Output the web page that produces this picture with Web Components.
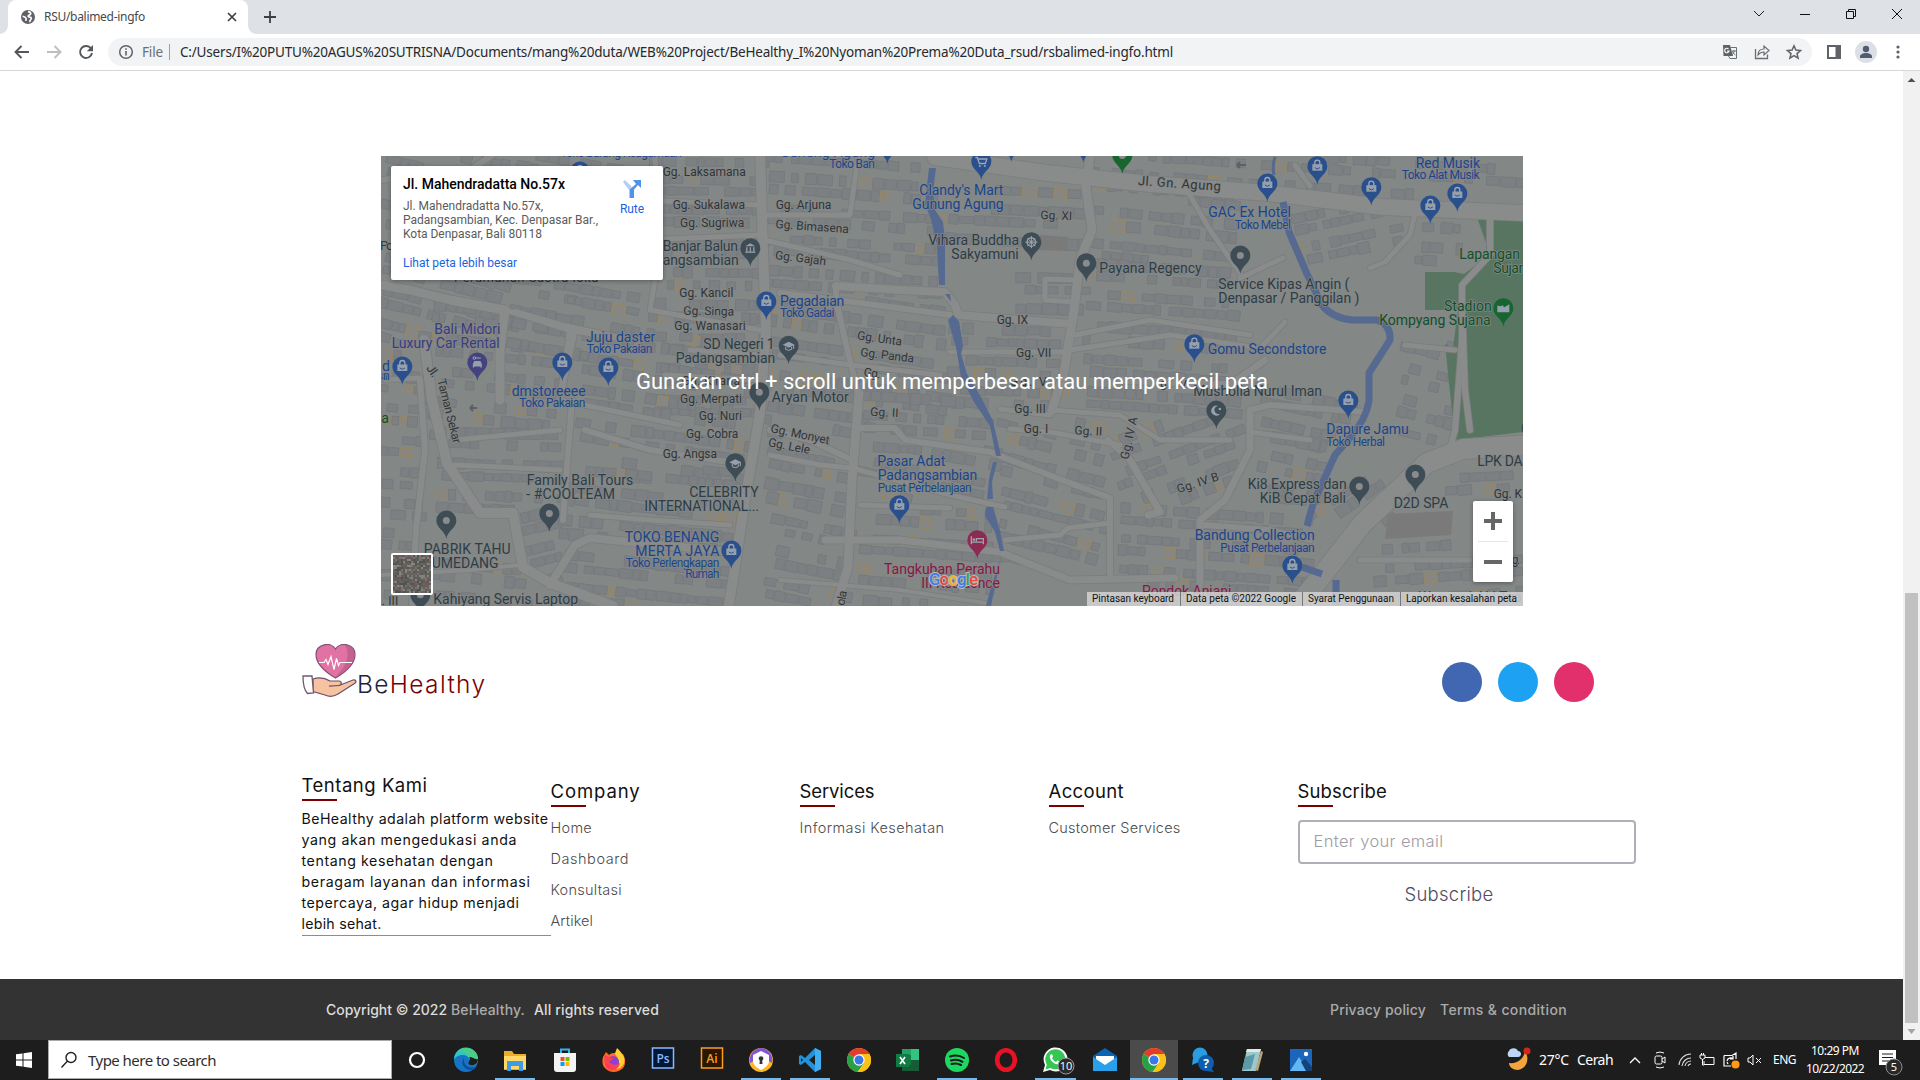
<!DOCTYPE html>
<html lang="id"><head><meta charset="utf-8"><title>RSU/balimed-ingfo</title>
<style>html,body{margin:0;width:1920px;height:1080px;overflow:hidden;background:#fff}</style></head>
<body><browser-window>
<map-embed></map-embed>
<site-footer></site-footer>
</browser-window>
<script>
const define=(name,html,after)=>customElements.define(name,class extends HTMLElement{
  constructor(){super();this.attachShadow({mode:'open'}).innerHTML=html}
  connectedCallback(){if(after)after.call(this,this.shadowRoot)}
});
const UI='"Noto Sans","Open Sans",sans-serif', GEO='Inter,"Open Sans",sans-serif';

/* One line of text tracked to a set width. */
define('fit-text','<style>:host{display:inline-block;white-space:nowrap}span{display:inline-block}</style><span><slot></slot></span>',function(r){
  const s=r.querySelector('span'),n=this.textContent.trim().length,w=+this.getAttribute('w');
  s.style.letterSpacing='0px';
  const d=(w-s.getBoundingClientRect().width)/n;
  s.style.letterSpacing=d+'px';this.style.width=w+'px';
});

/* ---------- browser chrome ---------- */
define('browser-tabs',`<style>
:host{display:flex;height:34px;background:#dee1e6;padding-left:8px;box-sizing:border-box;font:12px/34px ${UI};color:#45494d;position:relative}
.tab{width:240px;height:34px;background:#fff;border-radius:8px 8px 0 0;display:flex;align-items:center;padding:0 9px 0 13px;box-sizing:border-box;position:relative}
.tab:before,.tab:after{content:"";position:absolute;bottom:0;width:8px;height:8px;background:radial-gradient(circle at 0 0,#0000 7.5px,#fff 8px)}
.tab:before{left:-8px}.tab:after{right:-8px;transform:scaleX(-1)}
.tab fit-text{margin-left:9px;flex:1}svg{display:block}
.plus{margin:7px 0 0 15px}.win{margin-left:auto;display:flex;width:184px;padding-top:6px}.win svg{width:46px;height:16px}
</style><div class="tab"><svg width="14" height="14" viewBox="0 0 14 14"><circle cx="7" cy="7" r="7" fill="#5f6368"/><path d="M7 1.600c2 .2 3 1 2.700 2.200C9.400 5 7.500 4.800 7.200 6c-.2 1 .9 1 1.900 1.100 1.500.1 1.400 1.600.7 2.400-.7.7-.7 1.600-1.500 2.300M1.600 6.300c1.200.3 3 .9 3.400 1.900.4 1-.2 1.500 0 2.600" fill="none" stroke="#fff" stroke-width="1.700"/></svg><fit-text w="101">RSU/balimed-ingfo</fit-text><svg width="14" height="14"><path d="M3 3l8 8M11 3l-8 8" stroke="#3c4043" stroke-width="1.700"/></svg></div>
<svg class="plus" width="14" height="20"><path d="M7 4v12M1 10h12" stroke="#3c4043" stroke-width="1.800"/></svg>
<div class="win"><svg viewBox="0 0 46 16"><path d="M18 5l5 5 5-5" fill="none" stroke="#222"/></svg><svg viewBox="0 0 46 16"><path d="M18 8.500h10" stroke="#111"/></svg><svg viewBox="0 0 46 16"><path d="M18.500 5.500h7v7h-7zM20.500 5.500v-2h7v7h-2" fill="none" stroke="#111"/></svg><svg viewBox="0 0 46 16"><path d="M18 3l10 10M28 3L18 13" stroke="#111" fill="none"/></svg></div>`);

define('browser-toolbar',`<style>
:host{display:flex;align-items:center;height:37px;box-sizing:border-box;background:#fff;border-bottom:1px solid #d5d7da;padding:0 6px;font:13.500px/28px ${UI};color:#27292c}
svg{display:block;flex:none}.nav svg{width:32px;height:20px}.nav{display:flex;width:102px}
.box{display:flex;align-items:center;height:28px;width:1704px;border-radius:14px;background:#f1f3f4;padding:0 9px 0 10px;box-sizing:border-box}
.file{color:#6b6f74;margin:0 6px 0 8px}.bar{width:1px;height:16px;background:#9aa0a6;margin-right:10px}.end{margin-left:auto;display:flex;margin-right:-7px}.end svg{width:32px;height:20px}
.right{display:flex;margin-left:6px}.right svg{width:32px;height:24px}
</style><div class="nav">
<svg viewBox="0 0 32 20"><path d="M23 10H10M15.500 4l-6 6 6 6" fill="none" stroke="#53575c" stroke-width="1.900"/></svg>
<svg viewBox="0 0 32 20"><path d="M9 10h13M16.500 4l6 6-6 6" fill="none" stroke="#bcbfc2" stroke-width="1.900"/></svg>
<svg viewBox="0 0 32 20"><path d="M21 6.500A6 6 0 1 0 22 11" fill="none" stroke="#53575c" stroke-width="1.900"/><path d="M23 3v6.200h-6.200z" fill="#53575c"/></svg></div>
<div class="box"><svg width="16" height="16"><circle cx="8" cy="8" r="6.300" fill="none" stroke="#5f6368" stroke-width="1.500"/><path d="M8 7v4.500M8 4.200v1.600" stroke="#5f6368" stroke-width="1.600"/></svg>
<fit-text class="file" w="21">File</fit-text><div class="bar"></div><fit-text w="993">C:/Users/I%20PUTU%20AGUS%20SUTRISNA/Documents/mang%20duta/WEB%20Project/BeHealthy_I%20Nyoman%20Prema%20Duta_rsud/rsbalimed-ingfo.html</fit-text>
<div class="end"><svg viewBox="0 0 32 20"><path d="M9 3h7l3 11h-9.500z" fill="#5f6368"/><path d="M16.500 5.500H22.500V16.500H16l-1.500-2.500M18 9h4M20 8v1c0 2-1 3-2 4M18.500 9.500c.5 1.500 1.500 2.500 3 3.500" fill="none" stroke="#6b6f74"/><path d="M14.500 7A2.200 2.200 0 1 0 15 9h-2" fill="none" stroke="#fff" stroke-width="1.100"/></svg>
<svg viewBox="0 0 32 20"><path d="M9.500 7v9.500h12v-4" fill="none" stroke="#6b6f74" stroke-width="1.300"/><path d="M12 13c0-4 2.500-6 6-6V4l5 4.500-5 4.500v-3c-3 0-4.500 1-6 3z" fill="none" stroke="#6b6f74" stroke-width="1.200"/></svg>
<svg viewBox="0 0 32 20"><path d="M16 3.800l1.900 4.300 4.600.4-3.500 3.100 1.100 4.600-4.100-2.500-4.100 2.500 1.100-4.600-3.500-3.100 4.600-.4z" fill="none" stroke="#5f6368" stroke-width="1.500"/></svg></div></div>
<div class="right"><svg viewBox="0 0 32 24"><path d="M10 6h12v12H10z" fill="none" stroke="#5f6368" stroke-width="2"/><path d="M17.500 6H22v12h-4.500z" fill="#5f6368"/></svg>
<svg viewBox="0 0 32 24"><circle cx="16" cy="12" r="11" fill="#dcdfe6"/><circle cx="16" cy="9" r="3.200" fill="#505c74"/><path d="M10 18v-1.500c0-2 3-3.500 6-3.500s6 1.500 6 3.500V18z" fill="#505c74"/></svg>
<svg viewBox="0 0 32 24"><g fill="#5f6368"><circle cx="16" cy="7" r="1.600"/><circle cx="16" cy="12" r="1.600"/><circle cx="16" cy="17" r="1.600"/></g></svg></div>`);

define('page-scrollbar',`<style>:host{display:flex;flex-direction:column;width:17px;background:#f1f1f1;align-items:center}svg{display:block;height:17px;width:17px}.thumb{width:13px;height:430px;background:#c1c1c1;margin-top:505px}</style>
<svg><path d="M4.500 11l4-4 4 4z" fill="#505050"/></svg><div class="thumb"></div><svg><path d="M4.500 6l4 5 4-5z" fill="#a3a3a3"/></svg>`);

define('browser-window',`<style>:host{display:flex;flex-direction:column;width:1920px;height:1080px;overflow:hidden}
.view{display:flex;height:969px}main{display:flex;flex-direction:column;flex:1;background:#fff;padding-top:85px;box-sizing:border-box}</style>
<browser-tabs></browser-tabs><browser-toolbar></browser-toolbar><div class="view"><main><slot></slot></main><page-scrollbar></page-scrollbar></div><task-bar></task-bar>`);

/* ---------- map ---------- */
const O={A:[380,150],B:[780,150],C:[1150,150],D:[380,380],E:[780,380],F:[1150,380]};
const P=(s,x,y)=>[O[s][0]+x/3,O[s][1]+y/3];
const K={s:'#303538',b:'#1a458c',g:'#2d3d46',v:'#393c80',n:'#0f5028',r:'#851845'};
/* sector, x start, x end, baseline, text, size, colour, slope */
const LABELS=[
['A',540,905,22,'Toko Barang Keagamaan',12,'b'],['A',848,1097,77,'Gg. Laksamana',12,'s'],['A',878,1095,177,'Gg. Sukalawa',12,'s'],['A',900,1093,231,'Gg. Sugriwa',12,'s'],
['A',848,1074,304,'Banjar Balun',14,'g'],['A',848,1076,346,'angsambian',14,'g'],['A',222,655,395,'Perumahan Sastra loka',13,'s'],['A',0,40,300,'Po',13,'g'],
['A',898,1060,441,'Gg. Kancil',12,'s'],['A',910,1062,494,'Gg. Singa',12,'s',1],['A',883,1097,540,'Gg. Wanasari',12,'s'],['A',163,361,552,'Bali Midori',14,'v'],['A',35,359,594,'Luxury Car Rental',14,'v'],
['A',618,826,576,'Juju daster',14,'b'],['A',620,817,608,'Toko Pakaian',12,'b'],['A',970,1184,597,'SD Negeri 1',14,'g'],['A',887,1186,640,'Padangsambian',14,'g'],['A',6,30,662,'d',14,'b'],['A',4,29,690,'an',12,'b'],['A',138,165,655,'Jl.',12,'s',55],
['B',0,285,22,'Gunung Agung',14,'b'],['B',148,285,54,'Toko Ban',12,'b'],['B',418,670,136,"Clandy's Mart",14,'b'],['B',397,671,178,'Gunung Agung',14,'b'],['B',-13,154,177,'Gg. Arjuna',12,'s'],['B',-14,206,234,'Gg. Bimasena',12,'s',4],['B',-16,138,327,'Gg. Gajah',12,'s',7],
['B',781,876,207,'Gg. XI',12,'s',2],['B',445,717,285,'Vihara Buddha',14,'g'],['B',514,716,328,'Sakyamuni',14,'g'],['B',958,1265,370,'Payana Regency',14,'g'],['B',0,193,468,'Pegadaian',14,'b'],['B',0,163,500,'Toko Gadai',12,'b'],['B',650,744,522,'Gg. IX',12,'s'],['B',708,814,621,'Gg. VII',12,'s'],
['B',230,366,568,'Gg. Unta',12,'s',8],['B',240,402,618,'Gg. Panda',12,'s',7],['B',250,300,678,'Gg.',12,'s',8],['B',1073,1322,105,'Jl. Gn. Agung',13,'s',4],
['C',175,423,202,'GAC Ex Hotel',14,'b'],['C',254,423,237,'Toko Mebel',12,'b'],['C',797,990,54,'Red Musik',14,'b'],['C',755,989,86,'Toko Alat Musik',12,'b'],['C',205,598,417,'Service Kipas Angin (',14,'g'],['C',205,628,459,'Denpasar / Panggilan )',14,'g'],['C',928,1110,328,'Lapangan',14,'n'],['C',1030,1150,369,'Sujana',14,'n'],['C',882,1025,483,'Stadion',14,'n'],['C',688,1022,525,'Kompyang Sujana',14,'n'],['C',173,529,612,'Gomu Secondstore',14,'b'],
['D',395,617,48,'dmstoreeee',14,'b'],['D',418,616,82,'Toko Pakaian',12,'b'],['D',172,335,0,'Taman Sekar',12,'s',76],['D',900,1086,68,'Gg. Merpati',12,'s'],['D',956,1086,119,'Gg. Nuri',12,'s'],['D',918,1075,175,'Gg. Cobra',12,'s'],['D',848,1011,235,'Gg. Angsa',12,'s'],['D',905,1080,15,'Gg. Kirana',12,'s'],['D',440,760,315,'Family Bali Tours',14,'g'],['D',439,705,357,'- #COOLTEAM',14,'g'],['D',928,1136,350,'CELEBRITY',14,'g'],['D',793,1137,392,'INTERNATIONAL...',14,'g'],['D',734,1018,485,'TOKO BENANG',14,'b'],['D',766,1018,528,'MERTA JAYA',14,'b'],['D',737,1018,560,'Toko Perlengkapan',12,'b'],['D',916,1018,593,'Rumah',12,'b'],['D',131,392,521,'PABRIK TAHU',14,'g'],['D',130,356,563,'SUMEDANG',14,'g'],['D',160,594,672,'Kahiyang Servis Laptop',14,'g'],['D',5,55,674,'. III',12,'s'],['D',4,23,130,'a',14,'n'],['D',1170,1350,156,'Gg. Monyet',12,'s',12],['D',1163,1290,198,'Gg. Lele',12,'s',11],
['E',-25,206,65,'Aryan Motor',14,'g'],['E',270,355,107,'Gg. II',12,'s',3],['E',703,797,98,'Gg. III',12,'s'],['E',731,805,158,'Gg. I',12,'s'],['E',883,966,163,'Gg. II',12,'s',3],['E',1045,1175,240,'Gg. IV A',12,'s',-78],['E',292,496,258,'Pasar Adat',14,'b'],['E',293,592,300,'Padangsambian',14,'b'],['E',293,575,335,'Pusat Perbelanjaan',12,'b'],['E',312,660,583,'Tangkuban Perahu',14,'r'],['E',424,660,625,'III Residence',14,'r'],['E',193,240,678,'ola',12,'s',-80],['E',690,800,18,'Gg. V',12,'s'],
['F',130,516,48,'Musholla Nurul Iman',14,'g'],['F',30,110,22,'g. IV',12,'s',3],['F',529,776,162,'Dapure Jamu',14,'b'],['F',529,705,197,'Toko Herbal',12,'b'],['F',85,215,340,'Gg. IV B',12,'s',-18],['F',293,590,326,'Ki8 Express dan',14,'g'],['F',329,588,368,'KiB Cepat Bali',14,'g'],['F',731,895,383,'D2D SPA',14,'g'],['F',982,1118,257,'LPK DA',14,'g'],['F',1031,1116,353,'Gg. K',12,'s'],['F',134,494,480,'Bandung Collection',14,'b'],['F',211,494,515,'Pusat Perbelanjaan',12,'b'],['F',-24,244,648,'Pondok Anjani',14,'r'],['F',1085,1110,553,'g.',12,'s'],['F',805,1115,665,'Warung LALI Tua',14,'b']];
const PINS=[['A',600,120,'b','bag'],['A',1111,350,'g','bank'],['A',1159,510,'b','bag'],['A',67,705,'b','bag'],['A',292,693,'v','car'],['A',547,693,'b','bag'],['A',685,708,'b','bag'],['B',322,42,'b','dot'],['B',604,90,'b','cart'],['B',694,36,'b','dot'],['B',910,38,'b','dot'],['B',1027,72,'n','dot'],['B',754,332,'g','wheel'],['B',919,395,'g','dot'],['B',26,643,'g','cap'],
['C',352,156,'b','bag'],['C',502,104,'b','bag'],['C',664,167,'b','bag'],['C',841,222,'b','bag'],['C',922,186,'b','bag'],['C',271,372,'g','dot'],['C',1060,530,'n','field'],['C',133,638,'b','bag'],
['D',1138,92,'g','dot'],['D',1066,305,'g','cap'],['D',199,477,'g','dot'],['D',508,456,'g','dot'],['D',1054,567,'b','bag'],['D',121,700,'g','dot'],['E',358,431,'b','bag'],['E',592,536,'r','bed'],['F',199,147,'g','moon'],['F',595,117,'b','bag'],['F',628,375,'g','dot'],['F',796,339,'g','dot'],['F',427,612,'b','bag'],['F',1145,200,'g','dot'],['F',40,755,'r','dot']];
const PC={b:'#2a4f8d',g:'#3d4c55',v:'#444380',n:'#17652f',r:'#8b2b53'};
const f='fill="#96a0ad"',st='fill="none" stroke="#a2a7ad"';
const G={bag:`<path d="M-5-2h10v6.500H-5z" ${f}/><path d="M-2.500-1.500v-2a2.500 2.500 0 0 1 5 0v2" ${st} stroke-width="1.300"/><path d="M-2.500 1.500q2.500 2.500 5 0" fill="none" stroke="#2a4f8d"/>`,
dot:'<circle r="3.500" fill="#8b8b8b"/>',cap:`<path d="M-6-1l6-3 6 3-6 3z" ${f}/><path d="M-3 1v2.500q3 2 6 0V1M5-1v4" ${st}/>`,bank:`<path d="M-5-2l5-3 5 3z" ${f}/><path d="M-3.500-1v4M0-1v4M3.500-1v4M-5 4H5" ${st} stroke-width="1.200"/>`,
car:`<path d="M-4.500 5V1.500L-3-1.500h6l1.500 3V5H3V4h-6v1z" ${f}/><circle cx="-3" cy="-4.500" r="1.300" ${st}/><path d="M-1.500-4.500h5" ${st}/>`,cart:`<path d="M-6-4h2l2 6h6l1.500-4.500h-9" ${st} stroke-width="1.300"/><circle cx="-1.500" cy="4.500" r="1.100" ${f}/><circle cx="3.500" cy="4.500" r="1.100" ${f}/>`,
wheel:`<circle r="4.200" ${st} stroke-width="1.300"/><path d="M0-6V6M-6 0H6M-4-4L4 4M4-4L-4 4" ${st}/>`,field:`<path d="M-6-3q3 2 5 0l2 2 5-3V4H-6z" ${f}/>`,bed:`<path d="M-6-4v8M-6 2H6v2M6 1v-2.500H-1V1" ${st} stroke-width="1.300"/><circle cx="-3.500" cy="-.5" r="1.300" ${f}/>`,moon:`<path d="M2-4.500A5 5 0 1 0 4 3 4 4 0 1 1 2-4.500z" ${f}/><circle cx="3.500" cy="-1.500" r="1.300" ${f}/>`};
/* width, then points */
const ROADS=[[16,'935,157 1047,173 1150,184 1267,193 1383,207 1523,213'],[20,'1285,620 1313,587 1363,523 1427,463 1463,449 1530,445'],[9,'1090,157 1086,187 1092,230 1080,260 1074,310 1064,372 1052,410'],[9,'859,393 852,480 848,567 835,610'],[10,'760,150 763,250 766,330 760,413 745,500 733,580 728,610'],
[10,'424,340 432,400 447,463 480,513 513,513 523,567 550,583 613,606'],[6,'420,380 425,450 416,530 412,606'],[6,'572,400 563,520'],[8,'550,585 575,545 590,538 640,543 733,552'],[9,'381,285 410,290 450,300 505,310 500,350 500,400'],[6,'515,312 560,325 620,338 570,330 560,400'],[5,'505,310 575,332 560,400 680,425'],
[6,'585,430 650,450 735,463'],[8,'836,286 900,290 945,292 955,305 958,315 1072,324'],[6,'780,293 838,300 950,315'],[6,'836,286 836,300 845,340 858,393'],[6,'858,428 895,428 905,440 990,452 1062,480 1110,498 1110,575'],[6,'770,430 810,440 852,460'],[5,'770,455 820,465 852,468 950,495 1005,507'],[7,'825,540 900,540 1000,552 1070,580 1175,578'],[5,'1005,540 1060,535 1068,528 1110,523'],[7,'1130,460 1160,512 1148,515'],[6,'1130,460 1108,440'],
[5,'1185,187 1210,230 1240,273'],[5,'1240,278 1283,258'],[5,'1417,205 1410,235 1385,262 1370,268'],[5,'1295,165 1310,186'],[6,'1490,215 1490,255 1462,285 1462,340 1455,430 1450,448'],[6,'1462,300 1465,390 1470,430'],[5,'1075,280 1045,279 1045,300 1075,302'],[5,'1075,335 1150,320 1250,335'],[5,'1070,350 1170,335 1260,348 1285,322'],[7,'1250,410 1250,450 1225,500 1200,520 1200,590'],[6,'1250,410 1270,405 1365,412'],[5,'1250,432 1310,440'],[5,'1050,410 1120,415 1160,440 1230,440'],[5,'1000,409 1050,415'],[5,'1010,429 1050,432 1120,445'],[7,'1120,380 1230,385 1265,360'],[6,'1205,525 1270,530 1310,540'],[5,'1360,560 1470,560'],[5,'1405,345 1455,350'],[5,'455,440 560,430'],[5,'385,380 420,378'],[5,'590,515 650,520 730,525'],[5,'455,465 560,470'],[5,'860,505 950,508'],[5,'640,200 760,205'],[5,'640,240 760,235'],[5,'765,215 850,215 858,157'],[5,'765,240 850,260 900,275'],[5,'690,350 760,355'],[5,'665,375 760,380'],[5,'780,355 850,365 940,375'],[6,'381,180 470,170 500,150'],[5,'655,156 660,250 650,310 760,330'],[4,'381,575 470,570 520,565'],[4,'780,580 900,590 985,603'],[5,'950,352 1065,352'],[4,'950,495 1003,507']];
const PATCH=[[381,156,505,340,14],[505,156,650,300,9],[650,156,766,420,1],[766,156,940,300,4],[766,300,950,420,8],[940,190,1085,250,3],[1010,262,1085,310,1],[950,325,1070,410,2],[1090,200,1240,260,6],[1085,260,1235,420,4],[1090,157,1523,195,4],[1290,206,1405,260,-12],[1415,220,1462,262,3],[1395,345,1455,440,14],[1260,385,1355,450,12],[381,340,420,606,4],[424,300,560,440,6],[440,430,565,510,2],[520,515,560,580,-14],[580,340,750,480,8],[560,470,735,606,6],[430,560,530,606,6],[860,395,990,450,4],[765,430,850,606,11],[860,450,1000,500,11],[860,510,1000,606,4],[1000,420,1110,560,14],[1115,420,1240,500,-20],[1120,500,1310,606,4],[1260,440,1330,500,12],[1380,545,1523,606,-4],[1310,480,1390,520,-34],[1450,460,1523,500,-3],[505,300,650,360,10]];
function mapArt(){
  let seed=71;const R=()=>((seed=(seed*16807)%2147483647)-1)/2147483646;
  let o='<rect x="381" y="156" width="1142" height="450" fill="#838785"/>';
  for(const[x0,y0,x1,y1,a]of PATCH){
    const t=a*Math.PI/180,c=Math.cos(t),s=Math.sin(t),cx=(x0+x1)/2,cy=(y0+y1)/2,L=Math.hypot(x1-x0,y1-y0)/2;
    let row=0;
    for(let v=-L;v<L;row++){const h=10+R()*3;
      for(let u=-L;u<L;){const w=6+R()*9,X=cx+(u+w/2)*c-(v+h/2)*s,Y=cy+(u+w/2)*s+(v+h/2)*c;
        if(X>x0&&X<x1&&Y>y0&&Y<y1&&R()>.2){const q=R(),y=q<.06,hh=h*(.65+R()*.3);
          o+=`<rect x="${(-w/2).toFixed(1)}" y="${(-hh/2).toFixed(1)}" width="${w.toFixed(1)}" height="${hh.toFixed(1)}" transform="translate(${X.toFixed(1)} ${Y.toFixed(1)}) rotate(${(a+R()*4-2).toFixed(1)})" fill="${y?'#888682':'#7d8083'}" stroke="${y?'#9b8859':'#74787b'}" stroke-width=".8"/>`}
        u+=w+1.200+(R()<.14?6:0)}
      v+=h+(row%2?8:1)}
  }
  o+='<g fill="#577560"><path d="M1478 220h8v38l-22 16-10-2h-29v38h33l-5 38-8-4 10 96 68-8V220h-24v33l-8 4z"/><path d="M1494 220h29v32h-29z"/></g>';
  const road=(k)=>ROADS.map(([w,p])=>`<polyline points="${p}" stroke-width="${w+k}"/>`).join('');
  o+=`<g fill="none" stroke-linecap="round" stroke-linejoin="round"><g stroke="#7a7d7e">${road(1.6)}</g><g stroke="#8a8b8b">${road(0)}</g></g>`;
  o+='<g fill="#566990"><path d="M929 168h7l-3 24 2 18 8 12 2 18v45h-6l-2-40-6-26-6-15z"/><path d="M945 294l5 0 1 8z"/><path d="M948 320l5-5 6 6 4 25-2 8 6 20 15 25 11 22 8 35h-5l-6-30-16-24-13-25-5-30z"/><path d="M993 462h4l-5 20 1 17h-6l2-20z"/><path d="M986 507h7l3 10 4 14 4 20h-4l-5-19-10-16z"/><path d="M1000 561l-9 45h-5l6-22z"/></g><g fill="none" stroke="#566990" stroke-width="7" stroke-linejoin="round"><path d="M1275 157q-3 9-1 18" stroke-width="3"/><path d="M1283 202l6 30 18 42 15 31q10 13 30 15h25q14 5 13 20l-21 33v28q-3 19-20 38l-14 16-22 49-6 22"/><path d="M1302 567l20 7M1336 580v26"/></g>';
  o+='<path d="M1388 514l65-3-2 24-66 4zM1040 235l28 2-1 14-28-1z" fill="#7b7a7a"/><path d="M470 408h7m-7 0l3-3m-3 3l3 3M1237 165h9m-9 0l3-3m-3 3l3 3" stroke="#5d5f60" stroke-width="2" fill="none"/>';
  for(const[s,x,y,k,g]of PINS){const[X,Y]=P(s,x,y);
    o+=`<g transform="translate(${X} ${Y-18.500})"><path d="M0 18.500C-1 10-10 8-10 0a10 10 0 1 1 20 0C10 8 1 10 0 18.500z" fill="${PC[k]}"/>${G[g]}</g>`}
  for(const[s,a,b,y,t,z,k,r]of LABELS){const[X,Y]=P(s,a,y);let len=(b-a)/3;
    if(Math.abs(r)>50)len=t=='Jl.'?12:t=='Taman Sekar'?66:t=='ola'?15:43;
    o+=`<text x="${X}" y="${Y}" textLength="${len}" font-size="${z}" fill="${K[k]}" ${r?`transform="rotate(${r} ${X} ${Y})"`:''}>${t}</text>`}
  return o;
}
define('map-card',`<style>:host{position:absolute;left:10px;top:10px;width:272px;height:114px;box-sizing:border-box;background:#fff;border-radius:2px;box-shadow:0 1px 4px #0005;padding:9px 12px;font:12px/14px Roboto,sans-serif;color:#5b5b5b;display:flex;justify-content:space-between}
.c{display:flex;flex-direction:column}.t{font:500 14px/18px Roboto;color:#000;margin-bottom:6px}.l{margin-top:15px}.l,.r{color:#1a63e0}.r{display:flex;flex-direction:column;align-items:center;width:38px;padding-top:5px}svg{display:block;margin-bottom:4px}</style>
<div class="c"><fit-text class="t" w="162">Jl. Mahendradatta No.57x</fit-text><fit-text w="140">Jl. Mahendradatta No.57x,</fit-text><fit-text w="195">Padangsambian, Kec. Denpasar Bar.,</fit-text><fit-text w="139">Kota Denpasar, Bali 80118</fit-text><fit-text class="l" w="114">Lihat peta lebih besar</fit-text></div>
<div class="r"><svg width="18" height="18"><path d="M0 2l2-2 7 7-3 3z" fill="#b3cff6"/><path d="M6.500 18V9.500L13 4l-3-4h8v8l-3-3-4 4.500V18z" fill="#5094e8"/></svg><fit-text w="24">Rute</fit-text></div>`);
define('map-embed',`<style>:host{display:block;position:relative;width:1142px;height:450px;margin-left:381px;overflow:hidden;font:10px/14px Roboto,sans-serif}
.art{display:block;font-family:Roboto,sans-serif}.art text{paint-order:stroke;stroke:#858787;stroke-width:1.6px;stroke-linejoin:round}
.hint{position:absolute;inset:2px 0 0;display:flex;justify-content:center;align-items:center;font-size:22px;color:#fff}
.thumb{position:absolute;left:10px;top:397px;width:38px;height:38px;border:2px solid #fff;border-radius:2px;overflow:hidden;background:#555}
.goog{position:absolute;left:548px;top:411px;font:500 17px/24px Roboto;-webkit-text-stroke:2px #b9b9b9;paint-order:stroke fill}.goog b{font-weight:500}
.zoom{position:absolute;left:1092px;top:345px;width:40px;height:81px;background:#fff;border-radius:2px;box-shadow:0 1px 4px #0005}
.attr{position:absolute;right:0;bottom:0;height:14px;width:436px;display:flex;background:#d3d3d3d8;color:#111;padding-left:5px;box-sizing:border-box}.attr fit-text+fit-text{border-left:1px solid #777;margin-left:6px;padding-left:5px}</style>
<svg class="art" width="1142" height="450" viewBox="381 156 1142 450"></svg><div class="hint"><fit-text w="632">Gunakan ctrl + scroll untuk memperbesar atau memperkecil peta</fit-text></div><map-card></map-card>
<div class="thumb"><svg width="38" height="38"></svg></div>
<fit-text class="goog" w="48"><b style="color:#3f7ce8">G</b><b style="color:#e34a3f">o</b><b style="color:#edb51c">o</b><b style="color:#3f7ce8">g</b><b style="color:#3ba256">l</b><b style="color:#e34a3f">e</b></fit-text>
<div class="zoom"><svg width="40" height="81"><path d="M20 11v18M11 20h18M11 61h18" stroke="#666" stroke-width="4"/><path d="M5 40.500h30" stroke="#e6e6e6"/></svg></div>
<div class="attr"><fit-text w="82">Pintasan keyboard</fit-text><fit-text w="110">Data peta ©2022 Google</fit-text><fit-text w="86">Syarat Penggunaan</fit-text><fit-text w="111">Laporkan kesalahan peta</fit-text></div>`,function(r){
  r.querySelector('.art').innerHTML=mapArt();
  r.querySelectorAll('.goog b').forEach(b=>b.style.webkitTextStroke='2px #b9b9b9');
  let s=9;const R=()=>((s=(s*16807)%2147483647)/2147483647);let o='';
  const c=['#6c6262','#5d6259','#7a7470','#4f544f','#87837f','#6d5a59','#5a5d60'];
  for(let y=0;y<38;y+=2)for(let x=0;x<38;x+=2)o+=`<rect x="${x}" y="${y}" width="2.300" height="2.300" fill="${c[R()*7|0]}"/>`;
  r.querySelector('.thumb svg').innerHTML=o;
});

/* ---------- footer ---------- */
define('brand-logo',`<style>:host{display:flex;font:300 24.500px/36px ${GEO};color:#7a0000}i{font-style:normal;color:#1c2440}svg{display:block;margin-top:1px}fit-text{margin:22.500px 0 0 0}</style>
<svg width="55" height="55" viewBox="0 0 55 55"><path d="M33.500 34C25 29 14 21 14 10.500 14 0 29-3 33.500 5 38-3 53 0 53 10.500 53 21 42 29 33.500 34z" fill="#e072a4" stroke="#845070" stroke-width="1.200"/><path d="M43 1.500c5 0 9.500 3 9.500 9 0 10-11 18-19 22.500 7-7 12-15 12-23 0-4-1-7-2.500-8.500z" fill="#c4628f"/><path d="M17 18.500h5l2-3 2 5 3-8 3 13 2.500-11 2 7 1.500-3h12" fill="none" stroke="#fff" stroke-width="1.200"/>
<path d="M11 35c6-2 12-1 17 2h9c3 0 3 4 0 4.500l14-5.500c3-.5 4 2 1.500 3.500L36 50c-4 2.500-9 3-13 1l-12-3.500z" fill="#f6c3a0" stroke="#6f4d68" stroke-width="1.200"/><path d="M37 41.500l-10 .7" stroke="#6f4d68" fill="none" stroke-width="1.200"/><path d="M1 32h9l1.500 17-6 .5C2 46 1 39 1 32z" fill="#fff" stroke="#6f5970" stroke-width="1.300"/></svg><fit-text w="129.500"><i>Be</i>Healthy</fit-text>`);
define('footer-column',`<style>:host{display:flex;flex-direction:column;align-items:flex-start;font:300 14px/21px ${GEO};color:#333}
h3{margin:0;font:400 18.500px/27px ${GEO};color:#111;height:27px;padding-top:2px}hr{width:35px;height:2px;border:0;background:#7b0000;margin:0}</style><h3><slot name="head"></slot></h3><hr><slot></slot>`);
define('email-form',`<style>:host{display:flex;flex-direction:column;width:338px;font:300 16.500px/38px ${GEO};margin-top:13px;align-items:flex-start;color:#4f4c66}
div{box-sizing:border-box;width:338px;height:44px;border:2px solid #afafb7;border-radius:4px;padding-left:14px;color:#9c9ca5}.s{margin:11px 0 0 107px;font-size:18.500px}</style>
<div><fit-text w="130">Enter your email</fit-text></div><fit-text class="s" w="89">Subscribe</fit-text>`);
define('site-footer',`<style>:host{display:flex;flex-direction:column;flex:1;font:300 14px/21px ${GEO}}
.top{display:flex;justify-content:space-between;padding:37px 309px 0 302px;height:135px;box-sizing:border-box}.soc{display:flex;gap:16px;margin-top:19px}.soc i{width:40px;height:40px;border-radius:50%}
.cols{display:flex;padding:29px 0 0 301.500px;height:238px;box-sizing:border-box}footer-column{width:249px;margin-top:6px;flex:none}.about{margin-top:0}
.links{display:flex;flex-direction:column;color:#4b4b4b;line-height:31px;margin-top:5px;font-size:14.500px}.p{color:#111;display:flex;flex-direction:column;border-bottom:1px solid #8d8d8d;width:249px;margin-top:7px;padding-bottom:1px;font-weight:400;font-size:14.200px}
.copy{display:flex;justify-content:space-between;align-items:center;height:61px;background:#333;padding:0 336px 0 326px;color:#ababab;font:500 14px/21px ${GEO}}.copy div{display:flex}.w{color:#dcdcdc}
</style><div class="top"><brand-logo></brand-logo><div class="soc"><i style="background:#4267b2"></i><i style="background:#1da1f2"></i><i style="background:#e1306c"></i></div></div>
<div class="cols"><footer-column class="about"><fit-text slot="head" w="126">Tentang Kami</fit-text><div class="p"><fit-text w="247">BeHealthy adalah platform website</fit-text><fit-text w="215.500">yang akan mengedukasi anda</fit-text><fit-text w="192">tentang kesehatan dengan</fit-text><fit-text w="229">beragam layanan dan informasi</fit-text><fit-text w="218">tepercaya, agar hidup menjadi</fit-text><fit-text w="80">lebih sehat.</fit-text></div></footer-column>
<footer-column><fit-text slot="head" w="90">Company</fit-text><div class="links"><fit-text w="41.500">Home</fit-text><fit-text w="78.500">Dashboard</fit-text><fit-text w="71.500">Konsultasi</fit-text><fit-text w="42.500">Artikel</fit-text></div></footer-column>
<footer-column><fit-text slot="head" w="75">Services</fit-text><div class="links"><fit-text w="145">Informasi Kesehatan</fit-text></div></footer-column>
<footer-column><fit-text slot="head" w="75.500">Account</fit-text><div class="links"><fit-text w="132">Customer Services</fit-text></div></footer-column>
<footer-column><fit-text slot="head" w="89.500">Subscribe</fit-text><email-form></email-form></footer-column></div>
<div class="copy"><div><fit-text class="w" w="121">Copyright © 2022</fit-text><fit-text style="margin-left:4px" w="74">BeHealthy.</fit-text><fit-text class="w" style="margin-left:9px" w="125">All rights reserved</fit-text></div><div><fit-text w="96">Privacy policy</fit-text><fit-text style="margin-left:14px" w="127">Terms &amp; condition</fit-text></div></div>`);

/* ---------- taskbar ---------- */
const chrome='<circle cx="12" cy="12" r="12" fill="#fbc116"/><path d="M12 12L1.600 6A12 12 0 0 1 22.400 6z" fill="#e33b2e"/><path d="M1.600 6A12 12 0 0 0 10.500 23.900L17 15z" fill="#26a148"/><path d="M12 12V6h10.400A12 12 0 0 1 10.500 23.900L17 15z" fill="#fbc116"/><circle cx="12" cy="12" r="5.700" fill="#fff"/><circle cx="12" cy="12" r="4.500" fill="#3b78e7"/>';
const box=(bg,c,t)=>`<rect x="1.500" y="0" width="21" height="20" fill="${bg}" stroke="${c}" stroke-width="1.500"/><text x="12" y="14.500" text-anchor="middle" font-size="12" font-weight="600" fill="${c}">${t}</text>`;
const APPS=[
['<circle cx="12" cy="12" r="7" fill="none" stroke="#fff" stroke-width="2.200"/>'],
['<circle cx="12" cy="12" r="12" fill="#1673c5"/><path d="M0 12A12 12 0 0 1 24 11c0 5-4 7-8 6-2-1-2-2-1-4 1-3-2-6-6-6S1 9 0 12z" fill="#2fc4c7"/><path d="M12 0c7 0 12 4 12 11 0 5-4 7-8 6 0-8-2-13-12-14 2-2 5-3 8-3z" fill="#5bd268" opacity=".65"/><path d="M10 10c-4 5 0 12 7 12 3 0 4-1 5-3-7 2-13-1-12-9z" fill="#0d4f9c"/><path d="M15 13c1-2 1-3 0-4 4 0 6 3 9 2 0 5-4 7-8 6-2-1-2-2-1-4z" fill="#1e1e1e"/>'],
['<path d="M1 3h8l2 3h12v16H1z" fill="#e8ad2d"/><path d="M1 8h22v13H1z" fill="#ffd865"/><path d="M4 13h16v10h-4v-5H8v5H4z" fill="#3f9be8"/>',1],
['<path d="M8 6V1.500h8V6" fill="none" stroke="#34b3f1" stroke-width="2"/><path d="M1 5h22v16q0 3-3 3H4q-3 0-3-3z" fill="#f3f3f3"/><path d="M7.500 9h4v4h-4z" fill="#f25022"/><path d="M12.500 9h4v4h-4z" fill="#7fba00"/><path d="M7.500 14h4v4h-4z" fill="#00a4ef"/><path d="M12.500 14h4v4h-4z" fill="#ffb900"/>'],
['<path d="M1 9L4 4l3 3c2-2 4-2 6-2l2-4c2 2 3 4 3 6l3-1c3 5 3 12-1 15-5 4-12 4-16 0-4-3-4-8-3-12z" fill="#ff6b25"/><path d="M15 0c4 4 9 9 7 15-2 5-6 6-9 6 8-5 2-12 0-15z" fill="#ffd034"/><circle cx="11" cy="14" r="6" fill="#8a41d8"/><path d="M3 7c3 1 5 3 9 3-2 1-2 3-5 3 2 5 8 4 11 2-1 5-5 8-10 7-4-1-7-7-5-15z" fill="#ff3f54"/>'],
[box('#001833','#8bb8ff','Ps')],[box('#2a1700','#ff9b24','Ai')],
['<circle cx="12" cy="12" r="12" fill="#fbb724"/><path d="M12 0a12 12 0 0 1 11 15L12 9 1 15A12 12 0 0 1 12 0z" fill="#8056d6"/><path d="M12 3l8 4v6c0 4-4 7-8 9-4-2-8-5-8-9V7z" fill="#fff"/><circle cx="12" cy="10.500" r="2.300" fill="#333"/><path d="M11 11h2l.5 5h-3z" fill="#333"/>',1],
['<path d="M17 0l6 3v18l-6 3L7 14l-4 3-2-1V8l2-1 4 3zM17 7l-6 5 6 5zM3 10v4l2-2z" fill="#2292dc" fill-rule="evenodd"/><path d="M17 0l6 3v18l-6 3z" fill="#40aef2"/>',1],[chrome],
['<path d="M6 1h17v22H6z" fill="#21a366"/><path d="M6 12h17v11H6z" fill="#185c37"/><path d="M15 1h8v11h-8z" fill="#33c481"/><path d="M6 7h9v10H6z" fill="#107c41"/><path d="M0 6h13v13H0z" fill="#107c41"/><path d="M4 9l5 7M9 9l-5 7" stroke="#fff" stroke-width="1.700"/>'],
['<circle cx="12" cy="12" r="12" fill="#1ed760"/><path d="M5 8.500c5-1.500 10-1 14 1.500M6 12.500c4-1.300 8-.8 11.500 1.300M6.500 16c3.500-1 6.500-.6 9.500 1" fill="none" stroke="#1a1a1a" stroke-width="2" stroke-linecap="round"/>',1],
['<ellipse cx="12" cy="12" rx="8.800" ry="9.800" fill="none" stroke="#e81224" stroke-width="4.600"/>'],
['<path d="M0 24l2-7A12 12 0 1 1 7 22z" fill="#fff"/><path d="M2.500 21.500l1.300-5A10 10 0 1 1 7.500 20z" fill="#35c653"/><path d="M7 7c2-2 3 0 3 2l-1 1c1 2 2 3 4 4l1.500-1.500c2 .5 3 1.500 2 3-3 3-11-3-9.500-8.500z" fill="#fff"/><circle cx="23" cy="18" r="8" fill="#2b2b2b" stroke="#999"/><text x="23" y="22" font-size="11" text-anchor="middle" fill="#fff">10</text>',1],
['<path d="M0 8L12 0l12 8v15H0z" fill="#0a63b4"/><path d="M3 8h18v9H3z" fill="#fff"/><path d="M0 9l12 8 12-8v14H0z" fill="#2aa0ea"/>'],
[chrome,2],
['<circle cx="9" cy="7" r="7.500" fill="#2b9be2"/><path d="M2 10l-1 7 7-3z" fill="#2b9be2"/><circle cx="15" cy="15" r="8" fill="#0c5fae"/><path d="M20 20l3 4-8-1z" fill="#0c5fae"/><text x="15" y="19.500" font-size="12" font-weight="700" text-anchor="middle" fill="#fff">?</text>',1],
['<path d="M7 1h14l-5 22H2z" fill="#9dc8cd"/><path d="M7 1h14l-1 3H6z" fill="#dfe8e8"/><path d="M21 3l2 1-5 19-3-1z" fill="#bba67b"/><path d="M5 9l10-3-4 15-9 1z" fill="#5c9aa7"/>',1],
['<path d="M1 1h22v22H1z" fill="#1b65ba"/><path d="M1 23L10 9l9 14z" fill="#60b7f4"/><path d="M12 14l4-3 7 8v4H17z" fill="#164078"/><circle cx="17" cy="6" r="2.200" fill="#fff"/>',1]];
define('task-app',`<style>:host{display:flex;position:relative;width:49.100px;height:40px;align-items:center;justify-content:center;flex:none}:host([state="1"]):after,:host([state="2"]):after{content:"";position:absolute;left:4.500px;right:4.500px;bottom:0;height:2px;background:#76b9ed}:host([state="2"]){background:linear-gradient(#4b4b4b,#4b4b4b) center/48px 40px no-repeat}:host([state="2"]):after{left:.5px;right:.5px}svg{overflow:visible;font-family:"Open Sans",sans-serif}</style><svg width="24" height="24" viewBox="0 0 24 24"></svg>`,function(r){const a=APPS[+this.getAttribute('n')];r.querySelector('svg').innerHTML=a[0];if(a[1])this.setAttribute('state',a[1])});
define('task-bar',`<style>:host{display:flex;height:40px;width:1920px;background:#1d1d1d;color:#fff;font:12px/18px ${UI};position:relative}
.start{width:48px;display:flex;align-items:center;justify-content:center}.find{width:344px;height:39px;box-sizing:border-box;border:1px solid #aaa;background:#fff;color:#2e2e2e;display:flex;align-items:center;padding-left:11px;font-size:15px;margin-right:.7px}.find svg{margin-right:10px}
.tray{margin-left:auto;display:flex;align-items:center;width:415px;flex:none}.tray svg{flex:none;display:block;overflow:visible}.clock{display:flex;flex-direction:column;align-items:center;width:58px;margin-left:10px}</style>
<div class="start"><svg width="16" height="16"><path d="M0 2.300l6.500-.9v6.100H0zM7.500 1.200L16 0v7.500H7.500zM0 8.500h6.500v6.100L0 13.700zM7.500 8.500H16V16l-8.500-1.200z" fill="#fff"/></svg></div>
<div class="find"><svg width="18" height="18"><circle cx="11" cy="6.500" r="5" fill="none" stroke="#222" stroke-width="1.400"/><path d="M7.500 10L1.500 16.500" stroke="#222" stroke-width="1.400"/></svg><fit-text w="128">Type here to search</fit-text></div>
${APPS.map((_,i)=>`<task-app n="${i}"></task-app>`).join('')}
<div class="tray"><svg width="25" height="24"><path d="M20 3c5 8 2 17-7 19-5 0-9-3-9-7 8 1 15-4 16-12z" fill="#f5a33b"/><circle cx="22" cy="3" r="3.500" fill="#d2261c"/><path d="M4 9a4 4 0 0 1 0-6c1-3 7-4 9 0 4 0 4 6 0 6z" fill="#bcd5f8"/></svg>
<fit-text w="30" style="font-size:14px;margin-left:9px">27°C</fit-text><fit-text w="36" style="font-size:14px;margin-left:8px">Cerah</fit-text>
<svg width="12" height="16" style="margin-left:16px"><path d="M1 11l5-5 5 5" stroke="#fff" fill="none" stroke-width="1.300"/></svg>
<svg width="14" height="18" style="margin-left:12px"><rect x="2" y="5" width="7" height="8" rx="1.500" stroke="#fff" fill="none"/><path d="M9 8l3-2v6l-3-2M3 2q4-2 8 0M3 16q4 2 8 0" stroke="#fff" fill="none"/></svg>
<svg width="14" height="16" style="margin-left:11px"><g fill="none" stroke="#ddd" stroke-width="1.100"><path d="M1 13A12 12 0 0 1 13 2M4 14a9 9 0 0 1 9-8M7 14a6 6 0 0 1 6-5M10 14a3 3 0 0 1 3-2"/></g></svg>
<svg width="16" height="16" style="margin-left:7px"><path d="M6 5.500h9v7H5V9M1 3h5v3q-2.500 3-5 0zM2.500 1v2M4.500 1v2M3.500 7v6H5" fill="none" stroke="#fff"/></svg>
<svg width="16" height="16" style="margin-left:8px"><path d="M1 3.500h8l4-2.500v6M1 3.500V14h7M4 9a3.500 3.500 0 0 1 6-2M10 4v3H7M5 12l-1-2" fill="none" stroke="#fff" stroke-width="1.200"/><circle cx="12.500" cy="12.500" r="4" fill="#ff9a16"/></svg>
<svg width="15" height="16" style="margin-left:8px"><path d="M1 6h2l3-3v10L3 10H1zM9 6l5 5M14 6l-5 5" fill="none" stroke="#fff"/></svg>
<fit-text w="23" style="margin-left:11px">ENG</fit-text><div class="clock"><fit-text w="48">10:29 PM</fit-text><fit-text w="58">10/22/2022</fit-text></div>
<svg width="30" height="30" style="margin-left:15px"><path d="M0 5h17v15h-7l-3 3v-3H0z" fill="#fff"/><path d="M3 9h11M3 12.500h11M3 16h7" stroke="#1d1d1d"/><circle cx="15" cy="22" r="8" fill="#292929" stroke="#8c8c8c"/><text x="15" y="26" font-size="11" text-anchor="middle" fill="#fff">5</text></svg></div>`);
</script></body></html>
